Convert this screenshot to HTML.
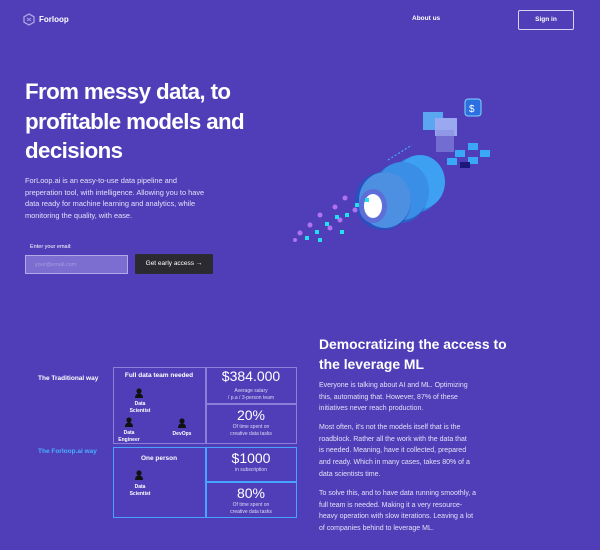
<!DOCTYPE html>
<html><head><meta charset="utf-8"><style>
*{margin:0;padding:0;box-sizing:border-box}
body{width:600px;height:550px;background:#4f3eb8;font-family:"Liberation Sans",sans-serif;color:#fff;position:relative;overflow:hidden}
.a{position:absolute;white-space:nowrap}
.p{font-size:7px;line-height:11.7px;color:#e4e0f7}
.b{position:absolute;border:1px solid #8b80d8}
.bl{border-color:#47a3ff}
.c{position:absolute;text-align:center;font-size:5px;color:#ddd8f5;line-height:6.5px}
.person{position:absolute;width:8px;height:10px}
</style></head><body>
<svg class="a" style="left:23px;top:13px" width="12" height="13" viewBox="0 0 12 13"><path d="M6 1L11 3.8V9.2L6 12L1 9.2V3.8Z" fill="none" stroke="#a9a3e3" stroke-width="1.3"/><path d="M4 5L8 8M8 5L4 8" stroke="#a9a3e3" stroke-width="1"/></svg>
<div class="a" style="left:39px;top:15px;font-size:8px;font-weight:bold">Forloop</div>
<div class="a" style="left:412px;top:15px;font-size:6.5px;font-weight:bold">About us</div>
<div class="a" style="left:518px;top:10px;width:56px;height:20px;border:1px solid #d8d4f2;border-radius:2px;font-size:6.5px;font-weight:bold;text-align:center;line-height:18px">Sign in</div>
<div class="a" style="left:25px;top:77px;font-size:22.3px;line-height:29.5px;font-weight:bold;letter-spacing:-0.6px">From messy data, to<br>profitable models and<br>decisions</div>
<div class="a p" style="left:25px;top:175px;font-size:7.4px">ForLoop.ai is an easy-to-use data pipeline and<br>preperation tool, with intelligence. Allowing you to have<br>data ready for machine learning and analytics, while<br>monitoring the quality, with ease.</div>
<div class="a" style="left:30px;top:244px;font-size:5.5px">Enter your email:</div>
<div class="a" style="left:25px;top:255px;width:103px;height:19px;background:#7c6dd0;border:1px solid #b3a9ea;font-size:5.5px;color:#a69ce0;padding:6px 9px">your@email.com</div>
<div class="a" style="left:135px;top:254px;width:78px;height:20px;background:#2b2a30;border-radius:1px;font-size:6.5px;text-align:center;line-height:20px">Get early access →</div>
<svg class="a" style="left:280px;top:95px" width="220" height="150" viewBox="280 95 220 150">
<g fill="#3da0f0"><ellipse cx="415" cy="185" rx="26" ry="28" fill="#2f7fd8"/><ellipse cx="420" cy="182" rx="25" ry="27"/></g>
<ellipse cx="400" cy="193" rx="28" ry="30" fill="#2a60c8"/><ellipse cx="402" cy="191" rx="27" ry="29" fill="#3a8ee6"/>
<ellipse cx="383" cy="201" rx="28" ry="29" fill="#2750c0"/><ellipse cx="385" cy="200" rx="26" ry="28" fill="#4d8fe0"/>
<ellipse cx="373" cy="206" rx="14" ry="17" fill="#5e6ed8"/><ellipse cx="373" cy="206" rx="9" ry="12" fill="#fff"/>
<g fill="#b271f0"><circle cx="300" cy="233" r="2.5"/><circle cx="310" cy="225" r="2.5"/><circle cx="320" cy="215" r="2.5"/><circle cx="335" cy="207" r="2.5"/><circle cx="345" cy="198" r="2.5"/><circle cx="355" cy="210" r="2.5"/><circle cx="330" cy="228" r="2.5"/><circle cx="295" cy="240" r="2"/><circle cx="340" cy="220" r="2.5"/></g>
<g fill="#22e0f0"><rect x="305" y="236" width="4" height="4"/><rect x="315" y="230" width="4" height="4"/><rect x="325" y="222" width="4" height="4"/><rect x="335" y="215" width="4" height="4"/><rect x="345" y="213" width="4" height="4"/><rect x="355" y="203" width="4" height="4"/><rect x="365" y="198" width="4" height="4"/><rect x="318" y="238" width="4" height="4"/><rect x="340" y="230" width="4" height="4"/></g>
<path d="M388 160L412 145" stroke="#4ab8ff" stroke-dasharray="2 2"/>
<rect x="423" y="112" width="20" height="18" fill="#5aa6f0"/><rect x="435" y="118" width="22" height="18" fill="#9aa8f0"/>
<rect x="436" y="130" width="18" height="22" fill="#8a8ee0" opacity=".6"/>
<rect x="465" y="99" width="16" height="17" rx="3" fill="#2c6fe0" stroke="#7fd6ff"/><text x="469" y="112" font-size="10" fill="#fff" font-family="Liberation Sans">$</text>
<g fill="#3aa8f5"><rect x="455" y="150" width="10" height="7"/><rect x="468" y="143" width="10" height="7"/><rect x="480" y="150" width="10" height="7"/><rect x="468" y="157" width="10" height="7"/><rect x="447" y="158" width="10" height="7"/></g><rect x="460" y="162" width="10" height="6" fill="#1a1878"/>
</svg>
<div class="a" style="left:319px;top:335px;font-size:13.9px;line-height:19.5px;font-weight:bold">Democratizing the access to<br>the leverage ML</div>
<div class="a p" style="left:319px;top:380px">Everyone is talking about AI and ML. Optimizing<br>this, automating that. However, 87% of these<br>initiatives never reach production.</div>
<div class="a p" style="left:319px;top:422px">Most often, it's not the models itself that is the<br>roadblock. Rather all the work with the data that<br>is needed. Meaning, have it collected, prepared<br>and ready. Which in many cases, takes 80% of a<br>data scientists time.</div>
<div class="a p" style="left:319px;top:488px">To solve this, and to have data running smoothly, a<br>full team is needed. Making it a very resource-<br>heavy operation with slow iterations. Leaving a lot<br>of companies behind to leverage ML.</div>
<div class="a" style="left:38px;top:375px;font-size:6.5px;font-weight:bold">The Traditional way</div>
<div class="a" style="left:38px;top:448px;font-size:6.5px;font-weight:bold;color:#4ab0ff">The Forloop.ai way</div>
<div class="b" style="left:113px;top:367px;width:184px;height:77px"></div>
<div class="b" style="left:205px;top:367px;width:1px;height:77px"></div>
<div class="b" style="left:205px;top:403px;width:92px;height:1px"></div>
<div class="b bl" style="left:113px;top:447px;width:184px;height:71px"></div>
<div class="b bl" style="left:205px;top:447px;width:1px;height:71px"></div>
<div class="b bl" style="left:205px;top:481px;width:92px;height:1px"></div>
<div class="a" style="left:113px;top:372px;width:92px;text-align:center;font-size:6.5px;font-weight:bold">Full data team needed</div>
<div class="a" style="left:113px;top:455px;width:92px;text-align:center;font-size:6.5px;font-weight:bold">One person</div>
<div class="a" style="left:205px;top:368px;width:92px;text-align:center;font-size:14px">$384.000</div>
<div class="c" style="left:205px;top:388px;width:92px">Average salary<br>/ p.a / 3-person team</div>
<div class="a" style="left:205px;top:407px;width:92px;text-align:center;font-size:14px">20%</div>
<div class="c" style="left:205px;top:424px;width:92px">Of time spent on<br>creative data tasks</div>
<div class="a" style="left:205px;top:450px;width:92px;text-align:center;font-size:14px">$1000</div>
<div class="c" style="left:205px;top:467px;width:92px">in subscription</div>
<div class="a" style="left:205px;top:485px;width:92px;text-align:center;font-size:14px">80%</div>
<div class="c" style="left:205px;top:502px;width:92px">Of time spent on<br>creative data tasks</div>
<svg width="0" height="0" style="position:absolute"><defs><symbol id="pp" viewBox="0 0 8 10"><circle cx="4" cy="3" r="2.6" fill="#111"/><path d="M0 10Q0 5.5 4 5.5Q8 5.5 8 10Z" fill="#111"/></symbol></defs></svg>
<svg class="person" style="left:135px;top:388px"><use href="#pp"/></svg>
<div class="c" style="left:120px;top:401px;width:40px;color:#fff;font-weight:bold">Data<br>Scientist</div>
<svg class="person" style="left:125px;top:417px"><use href="#pp"/></svg>
<div class="c" style="left:111px;top:430px;width:36px;color:#fff;font-weight:bold">Data<br>Engineer</div>
<svg class="person" style="left:178px;top:418px"><use href="#pp"/></svg>
<div class="c" style="left:162px;top:431px;width:40px;color:#fff;font-weight:bold">DevOps</div>
<svg class="person" style="left:135px;top:470px"><use href="#pp"/></svg>
<div class="c" style="left:120px;top:484px;width:40px;color:#fff;font-weight:bold">Data<br>Scientist</div>
</body></html>
